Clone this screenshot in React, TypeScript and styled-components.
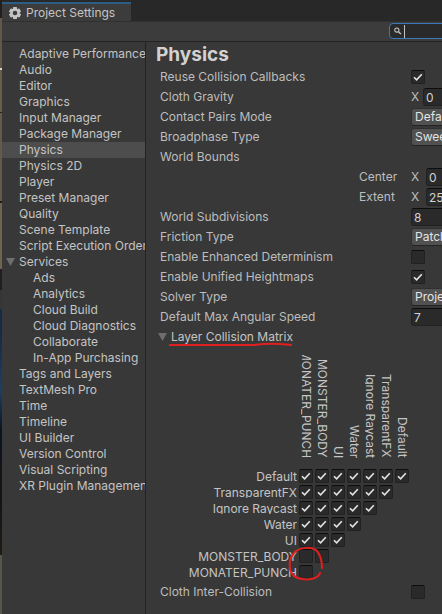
import React, { useState } from "react";
import styled, { createGlobalStyle } from "styled-components";

const GlobalStyle = createGlobalStyle`
  *, *::before, *::after { box-sizing: border-box; }
  body {
    margin: 0;
    background: #383838;
    color: #c4c4c4;
    font: 12px/16px Inter, "Liberation Sans", sans-serif;
    overflow: hidden;
  }
  button, input, select { font: inherit; color: inherit; margin: 0; }
`;

const Desktop = styled.div`
  display: flex;
  min-height: 100vh;
`;

const SceneEdge = styled.div`
  flex: none;
  width: 2px;
  background: linear-gradient(
    #241f1d 0 18px, #62584a 18px 68px, #d8d4cc 68px 70px, #6a5d4a 70px 112px,
    #2a241f 112px 113px, #645a49 113px 201px, #1e1b18 201px 203px, #6e644f 203px 269px,
    #1f1f1f 269px 290px, #353535 290px 309px, #172c48 309px 340px, #1d4066 390px,
    #0c1420 430px, #161412 500px, #211a15 555px, #55564c 555px
  );
`;

const SettingsWindow = styled.div`
  flex: 1;
  min-width: 0;
  display: flex;
  flex-direction: column;
  overflow: hidden;
`;

const TabBar = styled.div`
  display: flex;
  height: 21px;
  padding-top: 2px;
  background: #282828;
`;

const Tab = styled.button`
  display: flex;
  align-items: center;
  gap: 4px;
  width: 129px;
  padding: 0 0 0 6px;
  border: 0;
  border-top: 2px solid #2c5d87;
  background: #3c3c3c;
  white-space: nowrap;
`;

const Toolbar = styled.div`
  display: flex;
  height: 21px;
  padding: 1px 0 2px 387px;
  background: #3c3c3c;
  border-top: 1px solid #303030;
  border-bottom: 1px solid #232323;
`;

const SearchBox = styled.label`
  flex: none;
  display: flex;
  align-items: center;
  gap: 2px;
  width: 200px;
  height: 16px;
  padding-left: 4px;
  border: 1px solid #3a79bb;
  border-radius: 4px;
  background: #2a2a2a;
`;

const SearchInput = styled.input`
  width: 100%;
  height: 13px;
  padding: 0;
  border: 0;
  border-left: 1px solid #c4c4c4;
  outline: 0;
  background: transparent;
`;

const Body = styled.div`
  flex: 1;
  display: flex;
  min-height: 0;
`;

const Sidebar = styled.nav`
  flex: none;
  width: 144px;
  padding-top: 4px;
  border-right: 1px solid #232323;
  overflow: hidden;
`;

const NavItem = styled.a<{ $level: number; $selected: boolean }>`
  display: flex;
  align-items: center;
  height: 16px;
  padding-left: ${(p) => (p.$level ? 31 : 4)}px;
  background: ${(p) => (p.$selected ? "#4d4d4d" : "transparent")};
  color: inherit;
  text-decoration: none;
  white-space: nowrap;
`;

const Twisty = styled.span`
  flex: none;
  display: flex;
  justify-content: flex-start;
  width: 13px;
`;

const Content = styled.main`
  flex: 1;
  min-width: 0;
  padding-left: 10px;
  overflow: hidden;
`;

const Title = styled.h1`
  margin: 0;
  height: 25px;
  font-size: 19px;
  line-height: 25px;
  font-weight: 700;
  color: #d2d2d2;
`;

const Row = styled.div`
  display: flex;
  align-items: center;
  height: 20px;
  padding-left: 4px;
  white-space: nowrap;
  color: #bdbdbd;
`;

const RowLabel = styled.label`
  flex: none;
  width: 251px;
`;

const BoundsLabel = styled.span`
  flex: none;
  width: 52px;
  margin-left: 199px;
`;

const AxisLabel = styled.label<{ $wide?: boolean }>`
  flex: none;
  width: ${(p) => (p.$wide ? 15 : 12)}px;
`;

const NumberField = styled.input`
  flex: none;
  width: 120px;
  height: 18px;
  padding: 0 2px;
  border: 1px solid #212121;
  border-top-color: #0d0d0d;
  border-radius: 3px;
  background: #2a2a2a;
  color: #d2d2d2;
`;

const Dropdown = styled.select`
  flex: none;
  appearance: none;
  width: 240px;
  height: 18px;
  padding: 0 3px;
  border: 1px solid #303030;
  border-bottom-color: #242424;
  border-radius: 3px;
  background: #515151;
  color: #e4e4e4;
`;

const CheckFrame = styled.span`
  display: grid;
  width: 14px;
  height: 14px;
  & > * { grid-area: 1 / 1; }
`;

const CheckInput = styled.input`
  appearance: none;
  width: 14px;
  height: 14px;
  border: 1px solid #212121;
  border-top-color: #0d0d0d;
  border-radius: 2px;
  background: #2a2a2a;
  & + svg { visibility: hidden; pointer-events: none; }
  &:checked + svg { visibility: visible; }
`;

const FoldoutButton = styled.button`
  position: relative;
  display: flex;
  align-items: center;
  height: 20px;
  padding: 0 0 0 2px;
  border: 0;
  background: transparent;
  white-space: nowrap;
`;

const UnderlineMark = styled.svg`
  position: absolute;
  left: 12px;
  top: 15px;
`;

const MatrixArea = styled.div`
  position: relative;
  padding-bottom: 2px;
`;

const CircleMark = styled.svg`
  position: absolute;
  left: 132px;
  bottom: 0;
  pointer-events: none;
`;

const Matrix = styled.table`
  table-layout: fixed;
  width: 255px;
  border-collapse: collapse;
`;

const CornerCell = styled.td`
  width: 143px;
  padding: 0;
`;

const ColumnHead = styled.th`
  width: 16px;
  height: 121px;
  padding: 8px 0 0 2px;
  vertical-align: top;
  font-weight: 400;
`;

const ColumnText = styled.span`
  display: flex;
  justify-content: flex-end;
  width: 12px;
  height: 103px;
  line-height: 14px;
  writing-mode: vertical-rl;
  white-space: nowrap;
  overflow: hidden;
`;

const RowHead = styled.th`
  height: 16px;
  padding: 1px 2px 0 0;
  vertical-align: top;
  text-align: right;
  font-weight: 400;
`;

const RowText = styled.span`
  display: block;
  height: 13px;
  line-height: 16px;
  overflow: hidden;
`;

const MatrixCell = styled.td`
  padding: 0;
`;

const GearIcon = () => (
  <svg width="14" height="14" viewBox="0 0 14 14" aria-hidden="true">
    <g fill="#c4c4c4">
      {[0, 60, 120].map((a) => (
        <rect key={a} x="5" y="1" width="4" height="12" rx="0.6" transform={`rotate(${a} 7 7)`} />
      ))}
      <circle cx="7" cy="7" r="4.7" />
    </g>
    <circle cx="7" cy="7" r="2.3" fill="#3c3c3c" />
  </svg>
);

const SearchIcon = () => (
  <svg width="8" height="8" viewBox="0 0 8 8" fill="none" stroke="#c4c4c4" aria-hidden="true">
    <circle cx="3" cy="3" r="2.2" strokeWidth="1.1" />
    <path d="M4.7 4.7 7.3 7.3" strokeWidth="1.4" />
  </svg>
);

const Triangle = () => (
  <svg width="9" height="8" viewBox="0 0 9 8" aria-hidden="true">
    <path d="M0 0h9L4.5 8z" fill="#6e6e6e" />
  </svg>
);

type CheckProps = { id?: string; label?: string; initial: boolean };

const Check = ({ id, label, initial }: CheckProps) => (
  <CheckFrame>
    <CheckInput id={id} type="checkbox" aria-label={label} defaultChecked={initial} />
    <svg width="14" height="14" viewBox="0 0 14 14" fill="none" aria-hidden="true">
      <path d="M3 7.3 5.6 9.9 10.8 4.3" stroke="#e4e4e4" strokeWidth="1.6" />
    </svg>
  </CheckFrame>
);

const CheckRow = ({ id, label, initial }: { id: string; label: string; initial: boolean }) => (
  <Row>
    <RowLabel htmlFor={id}>{label}</RowLabel>
    <Check id={id} initial={initial} />
  </Row>
);

const NumberRow = ({ id, label, value }: { id: string; label: string; value: string }) => (
  <Row>
    <RowLabel htmlFor={id}>{label}</RowLabel>
    <NumberField id={id} defaultValue={value} />
  </Row>
);

const SelectRow = ({ id, label, value }: { id: string; label: string; value: string }) => (
  <Row>
    <RowLabel htmlFor={id}>{label}</RowLabel>
    <Dropdown id={id}>
      <option>{value}</option>
    </Dropdown>
  </Row>
);

const BoundsRow = ({ id, label, value }: { id: string; label: string; value: string }) => (
  <Row>
    <BoundsLabel>{label}</BoundsLabel>
    <AxisLabel htmlFor={id} $wide>X</AxisLabel>
    <NumberField id={id} defaultValue={value} />
  </Row>
);

const categories: { name: string; level?: number; parent?: boolean }[] = [
  { name: "Adaptive Performance" },
  { name: "Audio" },
  { name: "Editor" },
  { name: "Graphics" },
  { name: "Input Manager" },
  { name: "Package Manager" },
  { name: "Physics" },
  { name: "Physics 2D" },
  { name: "Player" },
  { name: "Preset Manager" },
  { name: "Quality" },
  { name: "Scene Template" },
  { name: "Script Execution Order" },
  { name: "Services", parent: true },
  { name: "Ads", level: 1 },
  { name: "Analytics", level: 1 },
  { name: "Cloud Build", level: 1 },
  { name: "Cloud Diagnostics", level: 1 },
  { name: "Collaborate", level: 1 },
  { name: "In-App Purchasing", level: 1 },
  { name: "Tags and Layers" },
  { name: "TextMesh Pro" },
  { name: "Time" },
  { name: "Timeline" },
  { name: "UI Builder" },
  { name: "Version Control" },
  { name: "Visual Scripting" },
  { name: "XR Plugin Management" },
];

const layers = ["Default", "TransparentFX", "Ignore Raycast", "Water", "UI", "MONSTER_BODY", "MONATER_PUNCH"];
const columns = [...layers].reverse();

const LayerMatrix = () => (
  <MatrixArea>
    <Matrix>
      <thead>
        <tr>
          <CornerCell />
          {columns.map((name) => (
            <ColumnHead key={name} scope="col">
              <ColumnText>{name}</ColumnText>
            </ColumnHead>
          ))}
        </tr>
      </thead>
      <tbody>
        {layers.map((row, r) => (
          <tr key={row}>
            <RowHead scope="row">
              <RowText>{row}</RowText>
            </RowHead>
            {columns.map((col, c) => (
              <MatrixCell key={col}>
                {c < layers.length - r && <Check label={`${row} / ${col}`} initial={r < 5} />}
              </MatrixCell>
            ))}
          </tr>
        ))}
      </tbody>
    </Matrix>
    <CircleMark width="40" height="40" viewBox="0 0 40 40" fill="none" aria-hidden="true">
      <path
        d="M34 26C34 18 32 12 28 8C23 5 14 5 8 9C3 13 1 20 2 27C3 33 7 36 14 37C20 38 27 37 30 34Q32 32 32 31"
        stroke="#e0201f"
        strokeWidth="2"
        strokeLinecap="round"
      />
    </CircleMark>
  </MatrixArea>
);

export default function App() {
  const [selected, setSelected] = useState("Physics");
  const [open, setOpen] = useState(true);

  return (
    <>
      <GlobalStyle />
      <Desktop>
        <SceneEdge />
        <SettingsWindow>
          <TabBar>
            <Tab type="button">
              <GearIcon />
              Project Settings
            </Tab>
          </TabBar>
          <Toolbar>
            <SearchBox>
              <SearchIcon />
              <SearchInput type="text" aria-label="Search settings" />
            </SearchBox>
          </Toolbar>
          <Body>
            <Sidebar>
              {categories.map(({ name, level = 0, parent }) => (
                <NavItem
                  key={name}
                  href="#"
                  $level={level}
                  $selected={selected === name}
                  onClick={(e) => {
                    e.preventDefault();
                    setSelected(name);
                  }}
                >
                  {level === 0 && <Twisty>{parent && <Triangle />}</Twisty>}
                  {name}
                </NavItem>
              ))}
            </Sidebar>
            <Content>
              <Title>Physics</Title>
              <CheckRow id="reuse" label="Reuse Collision Callbacks" initial />
              <Row>
                <RowLabel htmlFor="gravity">Cloth Gravity</RowLabel>
                <AxisLabel htmlFor="gravity">X</AxisLabel>
                <NumberField id="gravity" defaultValue="0" />
              </Row>
              <SelectRow id="pairs" label="Contact Pairs Mode" value="Default Contact Pairs" />
              <SelectRow id="broadphase" label="Broadphase Type" value="Sweep And Prune Broadphase" />
              <Row>World Bounds</Row>
              <BoundsRow id="center" label="Center" value="0" />
              <BoundsRow id="extent" label="Extent" value="250" />
              <NumberRow id="subdivisions" label="World Subdivisions" value="8" />
              <SelectRow id="friction" label="Friction Type" value="Patch Friction Type" />
              <CheckRow id="determinism" label="Enable Enhanced Determinism" initial={false} />
              <CheckRow id="heightmaps" label="Enable Unified Heightmaps" initial />
              <SelectRow id="solver" label="Solver Type" value="Projected Gauss Seidel" />
              <NumberRow id="angular" label="Default Max Angular Speed" value="7" />
              <FoldoutButton type="button" aria-expanded={open} onClick={() => setOpen(!open)}>
                <Twisty>
                  <Triangle />
                </Twisty>
                Layer Collision Matrix
                <UnderlineMark width="126" height="6" viewBox="0 0 126 6" fill="none" aria-hidden="true">
                  <path d="M1 3H86Q100 1 112 2T124 3" stroke="#e0201f" strokeWidth="2" />
                </UnderlineMark>
              </FoldoutButton>
              {open && <LayerMatrix />}
              <CheckRow id="cloth" label="Cloth Inter-Collision" initial={false} />
            </Content>
          </Body>
        </SettingsWindow>
      </Desktop>
    </>
  );
}
